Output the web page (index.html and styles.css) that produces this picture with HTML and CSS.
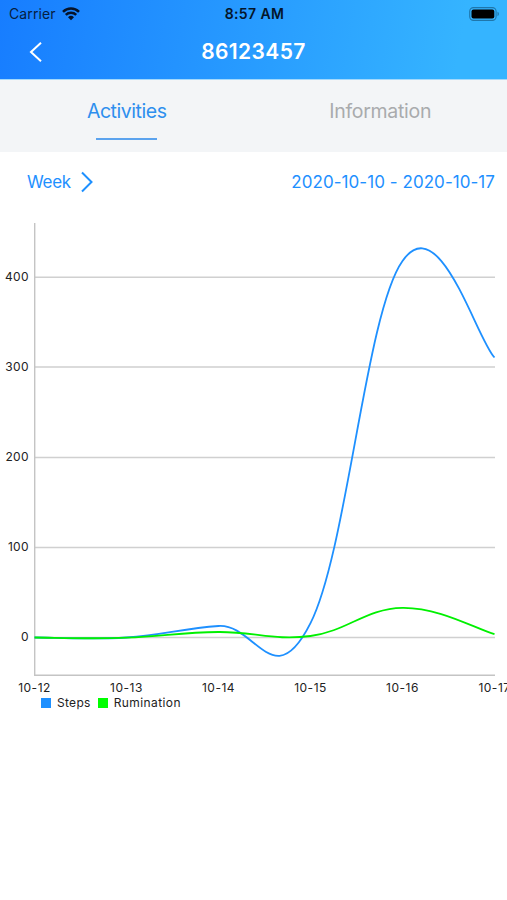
FILE: index.html
```html
<!DOCTYPE html>
<html lang="en">
<head>
  <meta charset="utf-8">
  <meta name="viewport" content="width=device-width, initial-scale=1">
  <title>86123457</title>
  <link rel="stylesheet" href="styles.css">
</head>
<body>
  <header class="header">
    <div class="status-bar">
      <div class="carrier">
        <span>Carrier</span>
        <svg class="wifi" width="18" height="14" viewBox="0 0 18 14">
          <path d="M1 4.900a11.400 11.400 0 0 1 16 0M3.800 7.900a7.400 7.400 0 0 1 10.400 0" fill="none" stroke="#06142a" stroke-width="2.500"/>
          <path d="M9 13.300 6 10.300a4.300 4.300 0 0 1 6 0z" fill="#06142a"/>
        </svg>
      </div>
      <span class="time">8:57 AM</span>
      <svg class="battery" width="31" height="14" viewBox="0 0 31 14">
        <rect x=".7" y=".6" width="26.4" height="12.8" rx="3.8" fill="none" stroke="#1f76ab" stroke-width="1.1"/>
        <rect x="2.5" y="2.5" width="22.8" height="9" rx="2" fill="#000"/>
        <path d="M28.5 4.8a2.4 2.4 0 0 1 0 4.4z" fill="#1f76ab"/>
      </svg>
    </div>
    <div class="nav-bar">
      <svg class="back" width="14" height="22" viewBox="0 0 14 22">
        <path d="M12 1.8 2 11l10 9.2" fill="none" stroke="#fff" stroke-width="2"/>
      </svg>
      <h1>86123457</h1>
    </div>
  </header>

  <nav class="tabs">
    <div class="tab active"><span>Activities</span></div>
    <div class="tab"><span>Information</span></div>
  </nav>

  <div class="range">
    <div class="period">
      <span class="week">Week</span>
      <svg width="14" height="22" viewBox="0 0 14 22">
        <path d="M2 1.5 11.5 11 2 20.5" fill="none" stroke="#1e90ff" stroke-width="2"/>
      </svg>
    </div>
    <span class="dates">2020-10-10 - 2020-10-17</span>
  </div>

  <div class="chart">
    <svg width="507" height="484" viewBox="0 212 507 484">
      <g class="grid">
        <path d="M34.5 277.2H495M34.5 367H495M34.5 457.5H495M34.5 547.5H495M34.5 637.5H495"/>
        <path class="axis" d="M34.700 223V675.200H495"/>
      </g>
      <g class="y-labels">
        <text x="28.8" y="280.5">400</text>
        <text x="28.8" y="370.5">300</text>
        <text x="28.8" y="461">200</text>
        <text x="28.8" y="551">100</text>
        <text x="28.8" y="641">0</text>
      </g>
      <g class="x-labels">
        <text x="34.5" y="692">10-12</text>
        <text x="126.5" y="692">10-13</text>
        <text x="218.5" y="692">10-14</text>
        <text x="310.5" y="692">10-15</text>
        <text x="402.5" y="692">10-16</text>
        <text x="494.5" y="692">10-17</text>
      </g>
      <path class="line steps" d="M34.5 637.5C52.9 637.5 89.7 639.8 126.5 637.5C163.3 635.2 181.7 628.6 218.5 626C255.3 623.4 273.7 696.4 310.5 623.2C347.3 550 365.7 312.8 402.5 261C439.3 207.6 476.1 338 494.5 357.5"/>
      <path class="line rumination" d="M34.5 637.5C52.9 637.5 89.7 639.2 126.5 637.7C163.3 636.3 181.7 632.3 218.5 632C255.3 631.7 273.7 640.8 310.5 636C347.3 631.2 365.7 608.4 402.5 607.8C439.3 607.3 476.1 629 494.5 634.2"/>
    </svg>
    <div class="legend">
      <span class="swatch swatch-steps"></span>
      <span class="legend-steps">Steps</span>
      <span class="swatch swatch-rumination"></span>
      <span class="legend-rumination">Rumination</span>
    </div>
  </div>
</body>
</html>
```
FILE: styles.css
```css
* { box-sizing: border-box; }
body { margin: 0; background: #fff; color: #222; font-family: Inter, "Liberation Sans", sans-serif; overflow: hidden; }
svg { display: block; flex: none; }

.header { height: 80px; background: linear-gradient(100deg, #177dff 0%, #35b4ff 90%); border-bottom: 1px solid #a3d9fc; }
.status-bar { display: grid; grid-template-columns: 1fr auto 1fr; align-items: center; height: 27px; padding: 0 7px 0 9px; }
.carrier { display: flex; align-items: center; gap: 6px; font-size: 14px; line-height: 27px; letter-spacing: 0.1px; color: #06203f; }
.time { font-size: 14px; line-height: 27px; font-weight: 600; letter-spacing: 0.4px; color: #04152a; }
.battery { justify-self: end; }
.nav-bar { display: grid; grid-template-columns: 1fr auto 1fr; align-items: center; height: 50px; padding: 0 29px; }
.nav-bar h1 { margin: 0; font-size: 21px; line-height: 50px; font-weight: 600; letter-spacing: 0.4px; color: #fff; }

.tabs { display: flex; height: 72px; background: #f3f5f7; }
.tab { display: flex; flex: 1; flex-direction: column; align-items: center; padding-top: 15px; font-size: 19.5px; line-height: 30px; letter-spacing: -0.3px; color: #a9abad; }
.active { letter-spacing: -0.45px; color: #2e8fee; }
.active::after { content: ""; width: 61px; height: 2px; margin-top: 13px; background: #5ba3ee; }
.tab span { padding-top: 1px; margin-bottom: -1px; }

.range { display: flex; justify-content: space-between; align-items: center; height: 60px; padding: 0 12px 0 27px; font-size: 17px; color: #1e90ff; }
.period { display: flex; align-items: center; gap: 9px; }
.week { letter-spacing: -0.3px; }
.dates { letter-spacing: 0.05px; }

.grid path { fill: none; stroke: #d0d0d0; stroke-width: 1.4; }
.grid .axis { stroke: #c4c4c4; }
.y-labels text, .x-labels text { font-size: 12px; fill: #222; }
.y-labels text { text-anchor: end; letter-spacing: 0.3px; }
.x-labels text { text-anchor: middle; letter-spacing: 0.5px; }
.line { fill: none; stroke-width: 1.8; }
.steps { stroke: #1e90ff; }
.rumination { stroke: #00f000; }

.legend { display: flex; align-items: center; height: 14px; padding-left: 41px; font-size: 12px; line-height: 14px; letter-spacing: 0.3px; }
.swatch { width: 10px; height: 10px; margin-right: 6px; }
.legend-steps { margin-right: 7px; }
.legend-rumination { letter-spacing: 0.4px; }
.swatch-steps { background: #1e90ff; }
.swatch-rumination { background: #00ff00; }
```
